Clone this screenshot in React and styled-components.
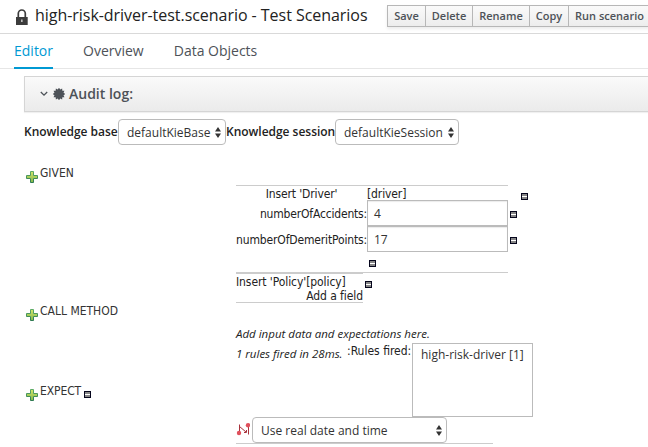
import React from "react";
import styled, { createGlobalStyle } from "styled-components";

const Global = createGlobalStyle`
  * { box-sizing: border-box; }
  body { margin: 0; background: #fff; overflow: hidden; }
`;

const Page = styled.div`
  width: 648px;
  height: 447px;
  overflow: hidden;
  background: #fff;
  color: #222;
  font: 12px/16px "Open Sans", sans-serif;
  white-space: nowrap;
`;

const Header = styled.header`
  display: flex;
  align-items: flex-start;
  height: 34px;
  border-bottom: 1px solid #d9d9d9;
  padding-left: 15px;

  > svg { margin-top: 9px; flex: none; }
`;

const Title = styled.h1`
  margin: 4px 0 0 7px;
  width: 352px;
  flex: none;
  font-size: 16px;
  line-height: 22px;
  font-weight: 400;
  letter-spacing: -0.04px;
`;

const Toolbar = styled.div`
  display: flex;
  flex: none;
  margin: 5px 0 0;
  height: 22px;
  box-shadow: 0 2px 3px rgba(0, 0, 0, 0.08);
`;

const ToolButton = styled.button`
  flex: none;
  width: ${(p) => p.$w}px;
  height: 22px;
  margin: 0;
  padding: 0 0 1px;
  border: 1px solid #b7b7b7;
  border-right-width: 0;
  background: linear-gradient(#fafafa, #ededed);
  color: #4d5258;
  font: 600 11px/18px "Open Sans", sans-serif;
  text-align: center;
`;

const Tabs = styled.nav`
  display: flex;
  height: 35px;
  padding-left: 14px;
  border-bottom: 1px solid #e6e6e6;
`;

const Tab = styled.a`
  height: 35px;
  margin-right: 30px;
  padding-top: 7px;
  font-size: 14px;
  line-height: 20px;
  color: ${(p) => (p.$active ? "#0099d3" : "#4d5258")};
  border-bottom: ${(p) => (p.$active ? "2px solid #0099d3" : "0")};
`;

const Panel = styled.section`
  display: flex;
  align-items: center;
  height: 36px;
  margin: 7px 0 0 24px;
  padding-left: 15px;
  border: 1px solid #d5d5d5;
  border-right: 0;
  background: linear-gradient(#fafafa, #ebebeb);
  box-shadow: 0 1px 1px rgba(0, 0, 0, 0.06);
  color: #4d5258;
  font-size: 14px;
  font-weight: 600;

  svg { margin-right: 5px; }
  svg + svg { margin-right: 4px; }
`;

const Settings = styled.div`
  display: flex;
  margin: 7px 0 0 24px;
  height: 26px;
`;

const SettingLabel = styled.label`
  flex: none;
  width: ${(p) => p.$w}px;
  padding-top: 5px;
  font-weight: 600;
  letter-spacing: -0.02px;
`;

const SelectBox = styled.div`
  display: flex;
  flex: none;
  align-items: center;
  justify-content: space-between;
  width: ${(p) => p.$w}px;
  height: 26px;
  padding: 1px 4px 0 8px;
  border: 1px solid #bbb;
  border-radius: 4px;
  background: #fff;
  color: #333;
`;

const Body = styled.main`
  display: grid;
  grid-template-columns: 212px 1fr;
  grid-template-rows: 138px 80px 90px;
  margin: 20px 0 0 24px;
  font-family: "DejaVu Sans Condensed", "DejaVu Sans", sans-serif;
`;

const Section = styled.div`
  display: flex;
  align-items: flex-start;
  color: #333;
  padding-left: 2px;

  > svg:first-child { margin: 6px 2px 0 0; }
  > svg:last-child:not(:first-child) { margin: 8px 0 0 3px; }
`;

const Label = styled.span`
  letter-spacing: ${(p) => p.$ls || 0}px;
`;

const Facts = styled.div`
  padding-top: 20px;
`;

const DriverRow = styled.div`
  display: flex;
  align-items: flex-start;
`;

const DriverFact = styled.div`
  width: 272px;
  height: 88px;
  border-top: 1px solid #ccc;
  border-bottom: 1px solid #ccc;
`;

const FactHead = styled.div`
  display: grid;
  grid-template-columns: 131px 1fr;
  height: 14px;
  line-height: 14px;
  padding-top: 1px;
  > :first-child { text-align: center; }
`;

const FieldRow = styled.div`
  display: grid;
  grid-template-columns: 131px 141px 10px;
  height: 26px;
  > :first-child { text-align: right; padding-top: 6px; }
  > svg { margin: 11px 0 0 2px; }
`;

const Value = styled.div`
  height: 26px;
  padding: 5px 6px 0;
  border: 1px solid #bbb;
  box-shadow: inset 0 1px 1px rgba(0, 0, 0, 0.08);
  color: #333;
  font-family: "Open Sans", sans-serif;
`;

const AddField = styled.div`
  padding: 8px 0 0 133px;
  line-height: 0;
`;

const FactDelete = styled.span`
  line-height: 0;
  margin: ${(p) => p.$m};
`;

const PolicyFact = styled.div`
  width: 127px;
  height: 30px;
  border-top: 1px solid #ccc;
  border-bottom: 1px solid #ccc;
  line-height: 14px;
  letter-spacing: -0.08px;
  > div { height: 14px; padding-top: 1px; }
  > :last-child { text-align: right; }
`;

const Results = styled.div`
  grid-column: 2;
  grid-row: 2 / 4;
  padding-top: 23px;
`;

const Note = styled.em`
  display: block;
  font-family: "Open Sans", sans-serif;
  font-size: 11.5px;
  line-height: 16px;
`;

const FiredRow = styled.div`
  display: flex;
  height: 74px;
  margin-top: 1px;
  > em { width: 111px; padding-top: 3px; flex: none; }
  > span { width: 65px; flex: none; }
`;

const RuleList = styled.div`
  width: 121px;
  height: 74px;
  padding: 3px 8px;
  border: 1px solid #bbb;
  color: #333;
  font-family: "Open Sans", sans-serif;
`;

const Clock = styled.div`
  display: flex;
  align-items: flex-start;
  width: 257px;
  height: 27px;
  border-bottom: 1px solid #ccc;
  font-family: "Open Sans", sans-serif;
  > svg { margin: 5px 2px 0 0; flex: none; }
`;

const Lock = () => (
  <svg width="13" height="16" viewBox="0 0 13 16">
    <path d="M3.300 8V4.500a3.500 3.500 0 0 1 7 0V8" fill="none" stroke="#3c3c3c" strokeWidth="1.700" />
    <path d="M1 8h11.700v8H1z" fill="#3c3c3c" />
    <path d="M6.200 10.500h1.300v2.500H6.200z" fill="#ddd" />
  </svg>
);

const Chevron = () => (
  <svg width="8" height="6" viewBox="0 0 8 6">
    <path d="M.8 1 4 4.200 7.200 1" fill="none" stroke="#4d5258" strokeWidth="1.300" />
  </svg>
);

const burst = Array.from({ length: 24 }, (_, i) => {
  const r = i % 2 ? 4.7 : 6.3;
  const a = (i * Math.PI) / 12;
  return `${6 + r * Math.cos(a)},${6 + r * Math.sin(a)}`;
}).join(" ");

const Burst = () => (
  <svg width="12" height="12" viewBox="0 0 12 12">
    <polygon points={burst} fill="#4d5258" />
  </svg>
);

const Arrows = () => (
  <svg width="6" height="11" viewBox="0 0 6 11">
    <path d="M0 4.500 3 0l3 4.500zM0 6.500h6L3 11z" fill="#333" />
  </svg>
);

const Plus = () => (
  <svg width="12" height="12" viewBox="0 0 12 12">
    <defs>
      <linearGradient id="plusFill" x2="0" y2="1">
        <stop offset="0" stopColor="#d3e56b" />
        <stop offset="1" stopColor="#82b84a" />
      </linearGradient>
      <linearGradient id="plusEdge" x2="0" y2="1">
        <stop offset="0" stopColor="#5cab67" />
        <stop offset="1" stopColor="#2f7a54" />
      </linearGradient>
    </defs>
    <path d="M4.500.5h3v4h4v3h-4v4h-3v-4h-4v-3h4z" fill="url(#plusFill)" stroke="url(#plusEdge)" />
  </svg>
);

const Minus = () => (
  <svg width="7" height="7" viewBox="0 0 7 7" shapeRendering="crispEdges">
    <path d="M0 0h7v7H0z" fill="#05051c" />
    <path d="M1 1h5v5H1z" fill="#858585" />
    <path d="M1 3h5v1H1z" fill="#fff" />
  </svg>
);

const Route = () => (
  <svg width="14" height="14" viewBox="0 0 14 14">
    <path d="M3.500 11V2.500M3.500 4.500 10 10M8 10.500h2.500V8M12.500 4v8.500" fill="none" stroke="#a8323c" strokeWidth="1" />
    <circle cx="3" cy="11" r="2.200" fill="#e0505c" />
    <circle cx="12" cy="3.200" r="2.200" fill="#e0505c" />
  </svg>
);

export default function App() {
  return (
    <Page>
      <Global />
      <Header>
        <Lock />
        <Title>high-risk-driver-test.scenario - Test Scenarios</Title>
        <Toolbar>
          <ToolButton $w={38}>Save</ToolButton>
          <ToolButton $w={47}>Delete</ToolButton>
          <ToolButton $w={57}>Rename</ToolButton>
          <ToolButton $w={39}>Copy</ToolButton>
          <ToolButton $w={82}>Run scenario</ToolButton>
        </Toolbar>
      </Header>
      <Tabs>
        <Tab $active>Editor</Tab>
        <Tab>Overview</Tab>
        <Tab>Data Objects</Tab>
      </Tabs>
      <Panel>
        <Chevron />
        <Burst />
        Audit log:
      </Panel>
      <Settings>
        <SettingLabel $w={94}>Knowledge base</SettingLabel>
        <SelectBox $w={108}>defaultKieBase<Arrows /></SelectBox>
        <SettingLabel $w={109}>Knowledge session</SettingLabel>
        <SelectBox $w={124}>defaultKieSession<Arrows /></SelectBox>
      </Settings>
      <Body>
        <Section><Plus /><Label>GIVEN</Label></Section>
        <Facts>
          <DriverRow>
            <DriverFact>
              <FactHead><Label $ls={-0.12}>Insert 'Driver'</Label><Label $ls={-0.12}>[driver]</Label></FactHead>
              <FieldRow><Label $ls={-0.18}>numberOfAccidents:</Label><Value>4</Value><Minus /></FieldRow>
              <FieldRow><Label $ls={-0.15}>numberOfDemeritPoints:</Label><Value>17</Value><Minus /></FieldRow>
              <AddField><Minus /></AddField>
            </DriverFact>
            <FactDelete $m="8px 0 0 13px"><Minus /></FactDelete>
          </DriverRow>
          <DriverRow>
            <PolicyFact><div>Insert 'Policy'[policy]</div><div>Add a field</div></PolicyFact>
            <FactDelete $m="8px 0 0 2px"><Minus /></FactDelete>
          </DriverRow>
        </Facts>
        <Section><Plus /><Label>CALL METHOD</Label></Section>
        <Section><Plus /><Label $ls={-0.1}>EXPECT</Label><Minus /></Section>
        <Results>
          <Note>Add input data and expectations here.</Note>
          <FiredRow>
            <Note>1 rules fired in 28ms.</Note>
            <Label>:Rules fired:</Label>
            <RuleList>high-risk-driver [1]</RuleList>
          </FiredRow>
          <Clock>
            <Route />
            <SelectBox $w={195}>Use real date and time<Arrows /></SelectBox>
          </Clock>
        </Results>
      </Body>
    </Page>
  );
}
